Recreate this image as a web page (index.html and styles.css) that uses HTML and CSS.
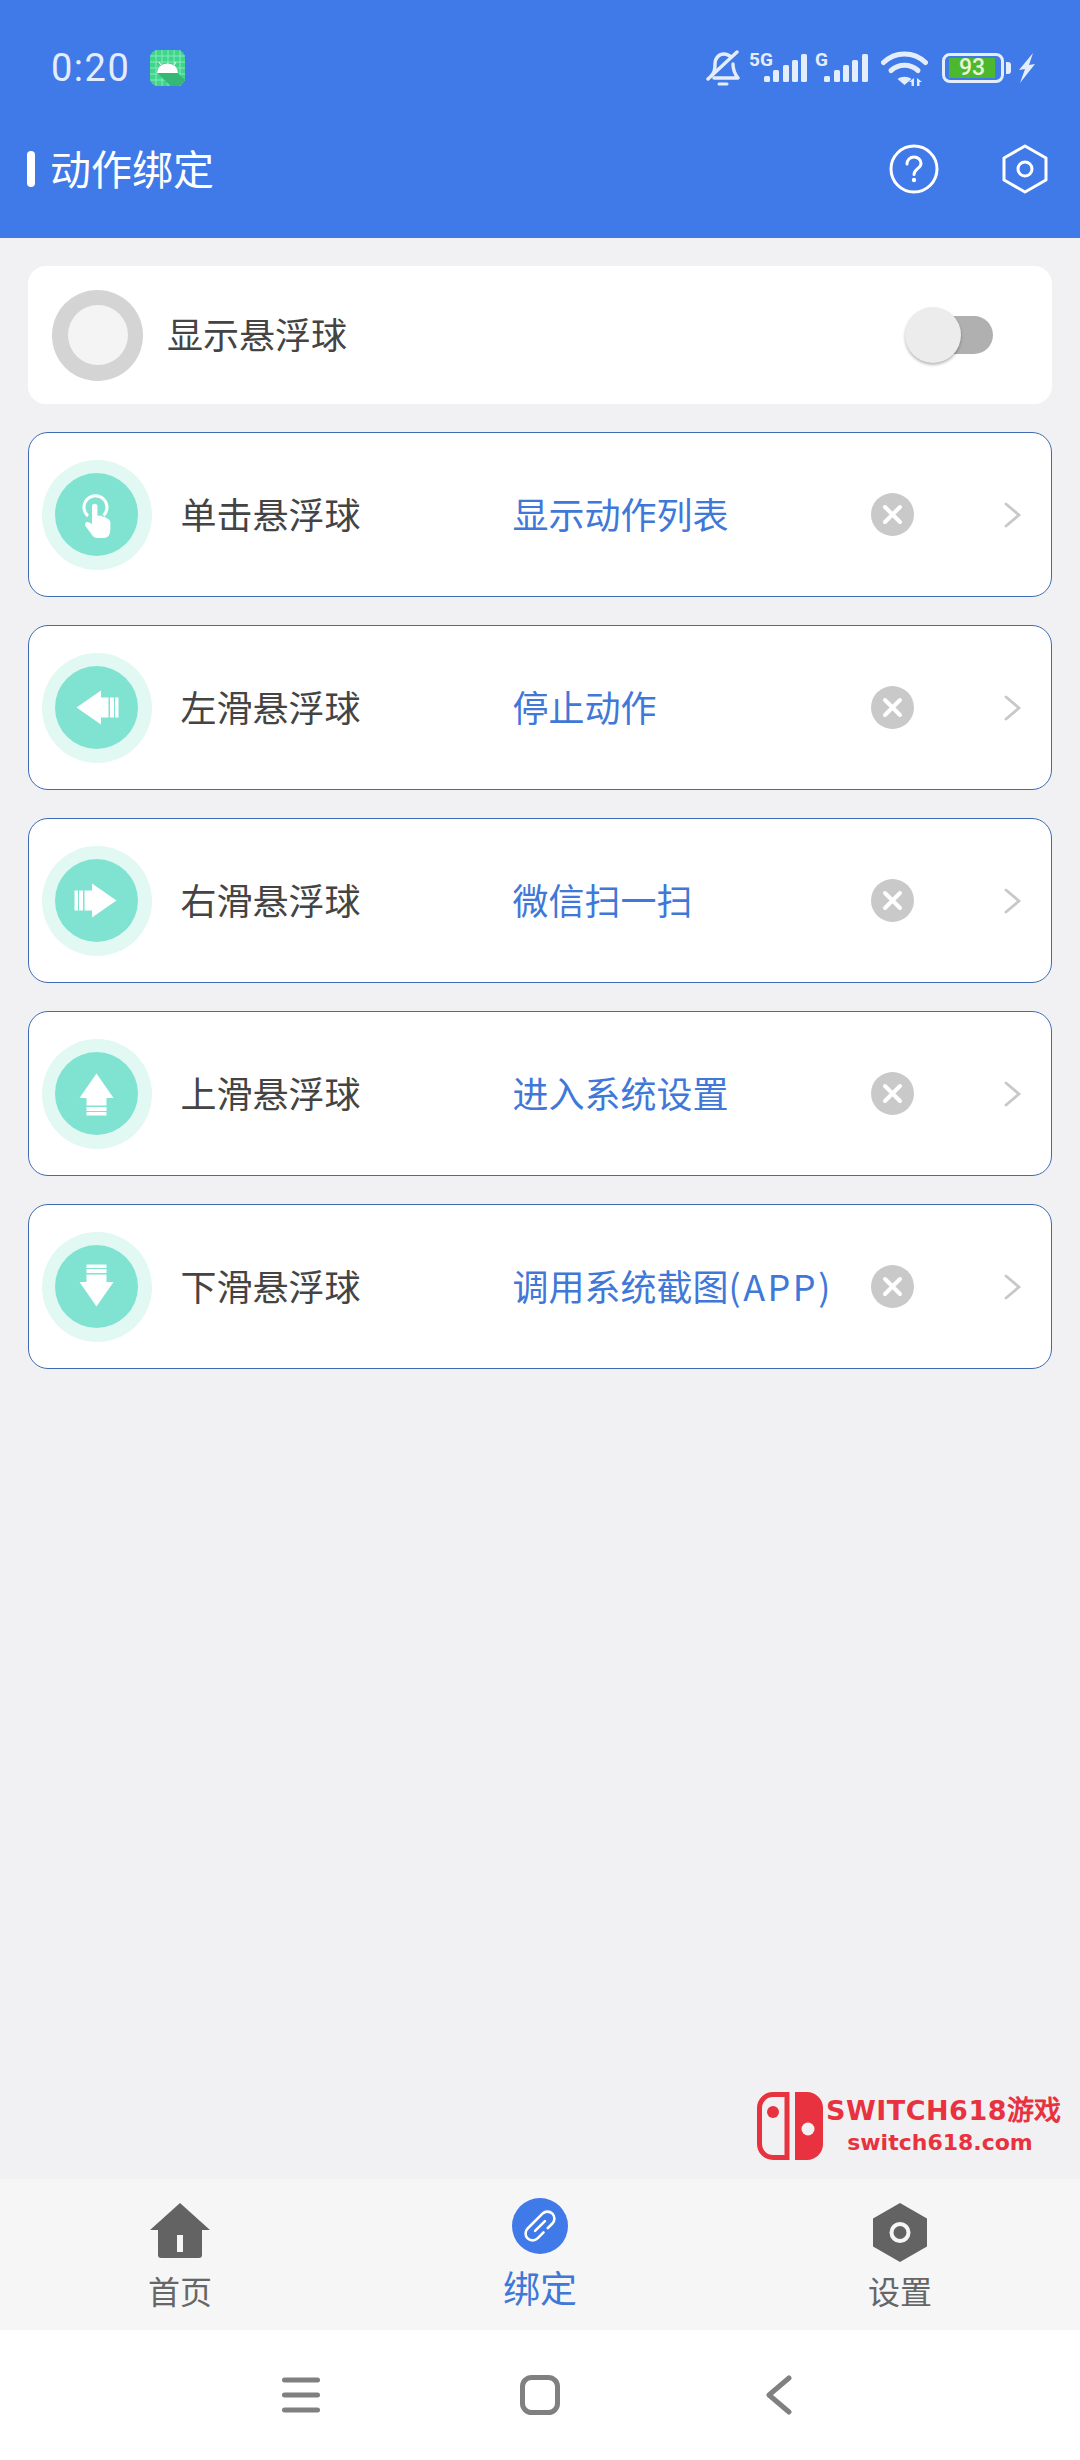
FILE: index.html

```html
<!DOCTYPE html>
<html lang="zh-CN">
<head>
  <meta charset="UTF-8">
  <title>动作绑定</title>
  <link rel="stylesheet" href="styles.css">
</head>
<body>
  <header class="header">
    <div class="status">
      <span class="time">0:20</span>
      <svg class="app-icon" viewBox="0 0 35 36" width="35" height="36">
        <rect width="35" height="36" rx="8" fill="#3fd68c"/>
        <path d="M6 0v36M12 0v36M18 0v36M24 0v36M30 0v36M0 6h35M0 12h35M0 18h35M0 24h35M0 30h35" stroke="#8be8ba" stroke-width="1"/>
        <path d="M7 23h21L35 30v-2a8 8 0 0 1-8 8h-6z" fill="#34b873"/>
        <path d="M7 23a10.500 9.500 0 0 1 21 0z" fill="#fff"/>
        <path d="M11 15l-2-3M24 15l2-3" stroke="#fff" stroke-width="1"/>
      </svg>
      <div class="status-icons">
        <svg class="bell" viewBox="0 0 34 38" width="34" height="38" fill="none" stroke="#e4edfc" stroke-width="3.400" stroke-linecap="round" stroke-linejoin="round">
          <path d="M6 26c3-3 3-6 3-11 0-6 4-10 9-10 3 0 5 1 7 3M27 15c0 6 1 9 5 14H8"/>
          <path d="M2 30L31 3"/>
          <path d="M13 35h8" stroke-width="3"/>
        </svg>
        <div class="signal signal-a">
          <span class="net">5G</span>
          <svg viewBox="0 0 59 36" width="59" height="36">
            <g fill="#e4edfc">
              <rect x="15" y="26" width="6" height="6" rx="1.500"/>
              <rect x="24" y="20" width="6" height="12" rx="1.500"/>
              <rect x="34" y="15" width="6" height="17" rx="1.500"/>
              <rect x="43" y="10" width="6" height="22" rx="1.500"/>
              <rect x="52" y="4" width="6" height="28" rx="1.500"/>
            </g>
          </svg>
        </div>
        <div class="signal signal-b">
          <span class="net">G</span>
          <svg viewBox="0 0 53 36" width="53" height="36">
            <g fill="#e4edfc">
              <rect x="9" y="26" width="6" height="6" rx="1.500"/>
              <rect x="19" y="20" width="6" height="12" rx="1.500"/>
              <rect x="28" y="15" width="6" height="17" rx="1.500"/>
              <rect x="37" y="10" width="6" height="22" rx="1.500"/>
              <rect x="47" y="4" width="6" height="28" rx="1.500"/>
            </g>
          </svg>
        </div>
        <svg class="wifi" viewBox="0 0 47 36" width="47" height="36" fill="none" stroke="#e4edfc" stroke-width="5" stroke-linecap="round">
          <path d="M2.500 12.500C14 1 33 1 44.500 12.500"/>
          <path d="M10 20.500c8-7 19-7 27 0"/>
          <path d="M23.500 35l-7-6c4-3 10-3 14 0z" fill="#e4edfc" stroke="none"/>
          <path d="M33 28v8h-2.500v-4h-2.500zM36 36v-8l5 4h-2.500v4z" fill="#e4edfc" stroke="none"/>
        </svg>
        <div class="battery">
          <div class="battery-body"><span class="battery-level">93</span></div>
          <div class="battery-nub"></div>
        </div>
        <svg class="bolt" viewBox="0 0 18 30" width="18" height="30">
          <path d="M15 0L1 17l6-1-5 14L17 11l-6 1z" fill="#e4edfc"/>
        </svg>
      </div>
    </div>
    <div class="toolbar">
      <span class="title-bar"></span>
      <h1 class="title">动作绑定</h1>
      <svg class="tool-help" viewBox="0 0 50 50" width="50" height="50" fill="none" stroke="#fff" stroke-width="3">
        <circle cx="25" cy="25" r="23"/>
        <path d="M18 20c0-4 3-7 7-7s7 3 7 6.500c0 5-7 5.500-7 11" stroke-linecap="round"/>
        <circle cx="25" cy="36" r="2.200" fill="#fff" stroke="none"/>
      </svg>
      <svg class="tool-gear" viewBox="0 0 46 50" width="46" height="50" fill="none" stroke="#fff" stroke-width="3" stroke-linejoin="round">
        <path d="M23 2l21 12v22L23 48 2 36V14z"/>
        <circle cx="23" cy="25" r="7"/>
      </svg>
    </div>
  </header>

  <main class="content">
    <section class="card switch-card">
      <div class="ball"><div class="ball-inner"></div></div>
      <span class="switch-label">显示悬浮球</span>
      <div class="toggle">
        <div class="toggle-track"></div>
        <div class="toggle-thumb"></div>
      </div>
    </section>

    <div class="row">
      <div class="gesture">
        <div class="gesture-inner">
          <svg viewBox="0 0 83 83" width="83" height="83">
            <path d="M33 43a11.500 11.500 0 1 1 15.500 -0.500" fill="none" stroke="#fff" stroke-width="3"/>
            <path d="M37 33.500a2.700 2.700 0 0 1 5.400 0v9l3.500.5v-1.500l1 2 3 .5 4 2.500q1.500 1 1.500 4V56q0 9-7 9h-6q-4 0-6-4l-6-8q-1-3 1-4 2-.5 5.600 2z" fill="#fff"/>
          </svg>
        </div>
      </div>
      <span class="row-label">单击悬浮球</span>
      <span class="row-value">显示动作列表</span>
      <div class="clear">
        <svg viewBox="0 0 43 43" width="43" height="43"><path d="M14 14l15 15M29 14L14 29" stroke="#fff" stroke-width="4" stroke-linecap="round"/></svg>
      </div>
      <svg class="chevron" viewBox="0 0 18 26" width="18" height="26"><path d="M2 2l13 11L2 24" fill="none" stroke="#c8c8c8" stroke-width="2.800" stroke-linecap="round"/></svg>
    </div>

    <div class="row">
      <div class="gesture">
        <div class="gesture-inner">
          <svg viewBox="0 0 83 83" width="83" height="83">
            <g fill="#fff" transform="rotate(180 41.500 41.500)">
              <rect x="19.500" y="31.500" width="3.500" height="20"/>
              <rect x="24" y="31.500" width="4" height="20"/>
              <path d="M29.500 31.500H37v-7l24.500 17L37 58.500v-7h-7.500z"/>
            </g>
          </svg>
        </div>
      </div>
      <span class="row-label">左滑悬浮球</span>
      <span class="row-value">停止动作</span>
      <div class="clear">
        <svg viewBox="0 0 43 43" width="43" height="43"><path d="M14 14l15 15M29 14L14 29" stroke="#fff" stroke-width="4" stroke-linecap="round"/></svg>
      </div>
      <svg class="chevron" viewBox="0 0 18 26" width="18" height="26"><path d="M2 2l13 11L2 24" fill="none" stroke="#c8c8c8" stroke-width="2.800" stroke-linecap="round"/></svg>
    </div>

    <div class="row">
      <div class="gesture">
        <div class="gesture-inner">
          <svg viewBox="0 0 83 83" width="83" height="83">
            <g fill="#fff">
              <rect x="19.500" y="31.500" width="3.500" height="20"/>
              <rect x="24" y="31.500" width="4" height="20"/>
              <path d="M29.500 31.500H37v-7l24.500 17L37 58.500v-7h-7.500z"/>
            </g>
          </svg>
        </div>
      </div>
      <span class="row-label">右滑悬浮球</span>
      <span class="row-value">微信扫一扫</span>
      <div class="clear">
        <svg viewBox="0 0 43 43" width="43" height="43"><path d="M14 14l15 15M29 14L14 29" stroke="#fff" stroke-width="4" stroke-linecap="round"/></svg>
      </div>
      <svg class="chevron" viewBox="0 0 18 26" width="18" height="26"><path d="M2 2l13 11L2 24" fill="none" stroke="#c8c8c8" stroke-width="2.800" stroke-linecap="round"/></svg>
    </div>

    <div class="row">
      <div class="gesture">
        <div class="gesture-inner">
          <svg viewBox="0 0 83 83" width="83" height="83">
            <g fill="#fff" transform="rotate(-90 41.500 41.500)">
              <rect x="19.500" y="31.500" width="3.500" height="20"/>
              <rect x="24" y="31.500" width="4" height="20"/>
              <path d="M29.500 31.500H37v-7l24.500 17L37 58.500v-7h-7.500z"/>
            </g>
          </svg>
        </div>
      </div>
      <span class="row-label">上滑悬浮球</span>
      <span class="row-value">进入系统设置</span>
      <div class="clear">
        <svg viewBox="0 0 43 43" width="43" height="43"><path d="M14 14l15 15M29 14L14 29" stroke="#fff" stroke-width="4" stroke-linecap="round"/></svg>
      </div>
      <svg class="chevron" viewBox="0 0 18 26" width="18" height="26"><path d="M2 2l13 11L2 24" fill="none" stroke="#c8c8c8" stroke-width="2.800" stroke-linecap="round"/></svg>
    </div>

    <div class="row">
      <div class="gesture">
        <div class="gesture-inner">
          <svg viewBox="0 0 83 83" width="83" height="83">
            <g fill="#fff" transform="rotate(90 41.500 41.500)">
              <rect x="19.500" y="31.500" width="3.500" height="20"/>
              <rect x="24" y="31.500" width="4" height="20"/>
              <path d="M29.500 31.500H37v-7l24.500 17L37 58.500v-7h-7.500z"/>
            </g>
          </svg>
        </div>
      </div>
      <span class="row-label">下滑悬浮球</span>
      <span class="row-value">调用系统截图<span class="latin">(APP)</span></span>
      <div class="clear">
        <svg viewBox="0 0 43 43" width="43" height="43"><path d="M14 14l15 15M29 14L14 29" stroke="#fff" stroke-width="4" stroke-linecap="round"/></svg>
      </div>
      <svg class="chevron" viewBox="0 0 18 26" width="18" height="26"><path d="M2 2l13 11L2 24" fill="none" stroke="#c8c8c8" stroke-width="2.800" stroke-linecap="round"/></svg>
    </div>

    <div class="watermark">
      <svg viewBox="0 0 66 68" width="66" height="68">
        <path d="M30 2.500H16A13.500 13.500 0 0 0 2.500 16v36A13.500 13.500 0 0 0 16 65.500h14z" fill="none" stroke="#e8323f" stroke-width="5"/>
        <circle cx="16" cy="20" r="6" fill="#e8323f"/>
        <path d="M38 0h12a16 16 0 0 1 16 16v36a16 16 0 0 1-16 16H38z" fill="#e8323f"/>
        <circle cx="51" cy="37" r="6.500" fill="#f1f1f4"/>
      </svg>
      <div class="watermark-text">
        <span class="watermark-name">SWITCH618游戏</span>
        <span class="watermark-url">switch618.com</span>
      </div>
    </div>
  </main>

  <nav class="tabs">
    <div class="tab">
      <div class="tab-icon">
        <svg viewBox="0 0 60 56" width="60" height="56">
          <path d="M30 0L60 27H52V52q0 3-3 3H11q-3 0-3-3V27H0z" fill="#636363"/>
          <rect x="27" y="32" width="6" height="17" fill="#f6f6f6"/>
        </svg>
      </div>
      <span class="tab-label">首页</span>
    </div>
    <div class="tab tab-active">
      <div class="tab-icon">
        <div class="link-circle">
          <svg viewBox="0 0 56 56" width="56" height="56" fill="none" stroke="#fff" stroke-width="2.600" stroke-linecap="round">
            <g transform="rotate(-45 28 28)">
              <path d="M26 35H17.500a7 7 0 0 1 0-14H38.500a7 7 0 0 1 0 14H32"/>
              <path d="M21 28H35"/>
            </g>
          </svg>
        </div>
      </div>
      <span class="tab-label">绑定</span>
    </div>
    <div class="tab">
      <div class="tab-icon">
        <svg viewBox="0 0 54 59" width="54" height="59">
          <path d="M27 0L54 15.500v28L27 59 0 43.500v-28z" fill="#636363"/>
          <circle cx="27" cy="29.500" r="8.500" fill="none" stroke="#f6f6f6" stroke-width="4"/>
        </svg>
      </div>
      <span class="tab-label">设置</span>
    </div>
  </nav>

  <footer class="navbar">
    <div class="nav-item">
      <svg viewBox="0 0 38 38" width="38" height="38" fill="none" stroke="#808080" stroke-width="5" stroke-linecap="round"><path d="M2.500 4h33M2.500 19h33M2.500 34h33"/></svg>
    </div>
    <div class="nav-item">
      <svg viewBox="0 0 40 40" width="40" height="40" fill="none" stroke="#808080" stroke-width="5"><rect x="2.500" y="2.500" width="35" height="35" rx="9"/></svg>
    </div>
    <div class="nav-item">
      <svg viewBox="0 0 26 40" width="26" height="40" fill="none" stroke="#808080" stroke-width="5" stroke-linecap="round" stroke-linejoin="round"><path d="M23 3L3 20l20 17"/></svg>
    </div>
  </footer>
</body>
</html>
```

FILE: styles.css

```css
* {
  box-sizing: border-box;
}

html,
body {
  margin: 0;
  height: 2460px;
}

body {
  display: flex;
  flex-direction: column;
  overflow: hidden;
  background: #f1f1f3;
  font-family: "Noto Sans CJK SC", "Noto Sans", sans-serif;
}

/* header */
.header {
  height: 238px;
  padding-top: 28px;
  background: #4079e8;
  flex: none;
}

.status {
  height: 80px;
  display: flex;
  align-items: center;
  padding: 0 44px 0 51px;
  color: #e4edfc;
}

.time {
  font-family: Roboto, sans-serif;
  font-size: 38px;
  letter-spacing: 1.500px;
  line-height: 46px;
}

.app-icon {
  margin-left: 20px;
}

.status-icons {
  margin-left: auto;
  display: flex;
  align-items: center;
}

.signal {
  position: relative;
  height: 36px;
}

.signal svg {
  display: block;
}

.net {
  position: absolute;
  left: 0;
  top: 1px;
  font-family: Roboto, sans-serif;
  font-size: 19px;
  font-weight: 700;
  line-height: 17px;
  color: #e4edfc;
}

.signal-a {
  margin-left: 9px;
}

.signal-b {
  margin-left: 7px;
}

.wifi {
  margin-left: 13px;
}

.battery {
  margin-left: 14px;
  display: flex;
  align-items: center;
}

.battery-body {
  width: 62px;
  height: 30px;
  border: 3px solid #e4edfc;
  border-radius: 8px;
  padding: 2px 4px;
}

.battery-level {
  display: block;
  width: 46px;
  height: 20px;
  background: #4cb82e;
  color: #e8f5d8;
  font-family: Roboto, sans-serif;
  font-size: 23px;
  font-weight: 500;
  line-height: 20px;
  text-align: center;
}

.battery-nub {
  width: 5px;
  height: 12px;
  margin-left: 2px;
  background: #e4edfc;
  border-radius: 0 3px 3px 0;
}

.bolt {
  margin-left: 7px;
}

.toolbar {
  height: 122px;
  display: flex;
  align-items: center;
  padding: 0 32px 0 27px;
}

.title-bar {
  width: 8px;
  height: 36px;
  background: #fff;
  border-radius: 4px;
}

.title {
  margin: -4px 0 0 15px;
  font-size: 41px;
  font-weight: 400;
  color: #fff;
  line-height: 50px;
}

.tool-help {
  margin-left: auto;
}

.tool-gear {
  margin-left: 63px;
}

/* content */
.content {
  flex: 1;
  position: relative;
  display: flex;
  flex-direction: column;
  gap: 28px;
  padding: 28px;
}

.card {
  background: #fff;
  border-radius: 18px;
}

.switch-card {
  height: 138px;
  display: flex;
  align-items: center;
  padding: 0 59px 0 24px;
}

.ball {
  width: 91px;
  height: 91px;
  border-radius: 50%;
  background: #d4d4d4;
  display: flex;
  align-items: center;
  justify-content: center;
}

.ball-inner {
  width: 60px;
  height: 60px;
  border-radius: 50%;
  background: #f4f4f4;
}

.switch-label {
  margin: -4px 0 0 24px;
  font-size: 36px;
  color: #444;
}

.toggle {
  position: relative;
  margin-left: auto;
  width: 88px;
  height: 56px;
  display: flex;
  align-items: center;
}

.toggle-track {
  margin-left: 20px;
  width: 68px;
  height: 38px;
  border-radius: 19px;
  background: #b0b0b0;
}

.toggle-thumb {
  position: absolute;
  left: 0;
  top: 0;
  width: 56px;
  height: 56px;
  border-radius: 50%;
  background: #ececec;
  box-shadow: 0 2px 3px rgba(0, 0, 0, 0.28);
}

.row {
  height: 165px;
  display: flex;
  align-items: center;
  background: #fff;
  border: 1.5px solid #3f6bb4;
  border-radius: 20px;
  padding-left: 12.5px;
}

.gesture {
  flex: none;
  width: 110px;
  height: 110px;
  border-radius: 50%;
  background: #e2f8f3;
  display: flex;
  align-items: center;
  justify-content: center;
}

.gesture-inner {
  width: 83px;
  height: 83px;
  border-radius: 50%;
  background: #80e3d1;
}

.gesture-inner svg {
  display: block;
}

.row-label {
  flex: none;
  width: 332px;
  margin: -4px 0 0 29px;
  font-size: 36px;
  color: #444;
}

.row-value {
  flex: none;
  width: 358.5px;
  margin-top: -4px;
  font-size: 36px;
  color: #3f78d8;
}

.latin {
  letter-spacing: 2.500px;
}

.clear {
  flex: none;
  width: 43px;
  height: 43px;
  border-radius: 50%;
  background: #c9c9c9;
}

.clear svg {
  display: block;
}

.chevron {
  margin-left: 90px;
}

.watermark {
  position: absolute;
  left: 757px;
  bottom: 19px;
  display: flex;
  gap: 3px;
  color: #e8323f;
  font-family: "DejaVu Sans", sans-serif;
  font-weight: 700;
}

.watermark-text {
  display: flex;
  flex-direction: column;
  align-items: center;
}

.watermark-name {
  font-size: 27px;
  letter-spacing: 0.500px;
  line-height: 38px;
  white-space: nowrap;
}

.watermark-url {
  margin-right: 8px;
  font-size: 22px;
  line-height: 26px;
  white-space: nowrap;
}

/* bottom tabs */
.tabs {
  flex: none;
  height: 151px;
  display: flex;
  background: #f6f6f6;
}

.tab {
  flex: 1;
  display: flex;
  flex-direction: column;
  align-items: center;
  padding-top: 24px;
  color: #666;
}

.tab-icon {
  height: 67px;
}

.tab-icon svg {
  display: block;
}

.tab-label {
  font-size: 32px;
  line-height: 40px;
}

.tab-active {
  padding-top: 19px;
  color: #3f78d8;
}

.tab-active .tab-icon {
  height: 69px;
}

.tab-active .tab-label {
  font-size: 37px;
}

.link-circle {
  width: 56px;
  height: 56px;
  border-radius: 50%;
  background: #4079e8;
}

/* system nav */
.navbar {
  flex: none;
  height: 130px;
  display: flex;
  justify-content: center;
  align-items: center;
  background: #fff;
}

.nav-item {
  width: 239px;
  display: flex;
  justify-content: center;
}
```
